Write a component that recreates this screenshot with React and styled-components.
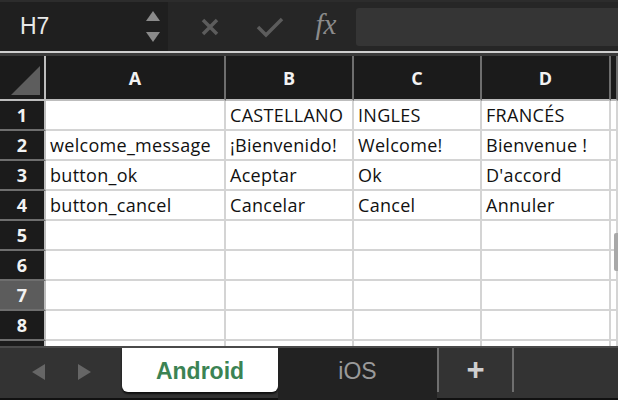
import React from 'react';
import styled, { createGlobalStyle } from 'styled-components';

const GlobalStyle = createGlobalStyle`
  html, body {
    margin: 0;
    padding: 0;
    background: #262626;
    overflow: hidden;
  }
  * {
    box-sizing: border-box;
  }
`;

const Window = styled.div`
  width: 618px;
  height: 400px;
  display: flex;
  flex-direction: column;
  background: #262626;
  overflow: hidden;
`;

const Toolbar = styled.div`
  height: 51px;
  display: flex;
  align-items: stretch;
  background: #262626;
  border-top: 2px solid #2c2c2c;
`;

const NameBox = styled.div`
  width: 168px;
  display: flex;
  align-items: center;
  justify-content: space-between;
  padding: 0 8px 0 20px;
  background: #1f1f1f;
  color: #e8e8e8;
  font-family: 'Liberation Sans', Arial, sans-serif;
  font-size: 23px;
`;

const Stepper = styled.div`
  display: flex;
  flex-direction: column;
  gap: 11px;
`;

const Arrow = styled.div`
  width: 0;
  height: 0;
  border-left: 7px solid transparent;
  border-right: 7px solid transparent;
  ${(p) => (p.up ? 'border-bottom: 10px solid #8a8a8a;' : 'border-top: 10px solid #8a8a8a;')}
`;

const ActionIcon = styled.div`
  width: 60px;
  display: flex;
  align-items: center;
  justify-content: center;
`;

const Fx = styled.div`
  width: 52px;
  display: flex;
  align-items: center;
  justify-content: center;
  color: #8c8c8c;
  font-family: 'Liberation Serif', 'DejaVu Serif', serif;
  font-style: italic;
  font-size: 29px;
  padding-bottom: 4px;
`;

const FormulaInput = styled.div`
  flex: 1;
  margin: 6px 0 5px 4px;
  background: #353535;
  border-radius: 3px 0 0 3px;
`;

const Divider = styled.div`
  height: 5px;
  border-top: 2px solid #cfcfcf;
  background: #3a3a3a;
`;

const Sheet = styled.div`
  flex: 1;
  display: grid;
  grid-template-columns: 46px 180px 128px 128px 129px 1fr;
  grid-template-rows: 45px repeat(9, 30px);
  background: #ffffff;
  overflow: hidden;
  position: relative;
`;

const Corner = styled.div`
  background: #1b1b1b;
  border-right: 2px solid #bdbdbd;
  border-bottom: 2px solid #bdbdbd;
  position: relative;
  &::after {
    content: '';
    position: absolute;
    right: 4px;
    bottom: 4px;
    width: 0;
    height: 0;
    border-left: 29px solid transparent;
    border-bottom: 29px solid #5d5d5d;
  }
`;

const ColHead = styled.div`
  background: #1b1b1b;
  color: #f2f2f2;
  border-right: 2px solid #6e6e6e;
  border-bottom: 2px solid #bdbdbd;
  display: flex;
  align-items: center;
  justify-content: center;
  font-family: 'Open Sans', Lato, sans-serif;
  font-weight: 700;
  font-size: 18px;
`;

const RowHead = styled.div`
  background: ${(p) => (p.selected ? '#5c5c5c' : '#1b1b1b')};
  color: #f2f2f2;
  border-right: 2px solid #bdbdbd;
  border-bottom: 2px solid #6e6e6e;
  display: flex;
  align-items: center;
  justify-content: center;
  font-family: 'Open Sans', Lato, sans-serif;
  font-weight: 700;
  font-size: 18px;
`;

const Cell = styled.div`
  border-right: 2px solid #d4d4d4;
  border-bottom: 2px solid #d4d4d4;
  color: #111;
  font-family: 'Open Sans', Lato, sans-serif;
  font-size: 18px;
  letter-spacing: 0.3px;
  display: flex;
  align-items: center;
  padding-left: 4px;
  white-space: nowrap;
  overflow: hidden;
`;

const ScrollThumb = styled.div`
  position: absolute;
  right: 0;
  top: 177px;
  width: 4px;
  height: 38px;
  border-radius: 2px 0 0 2px;
  background: #a8a8a8;
`;

const TabBar = styled.div`
  height: 54px;
  display: flex;
  background: #333333;
  border-top: 2px solid #4a4a4a;
  border-bottom: 2px solid #111;
`;

const NavArea = styled.div`
  width: 122px;
  display: flex;
  align-items: center;
  justify-content: center;
  gap: 33px;
  padding-bottom: 2px;
`;

const NavArrow = styled.div`
  width: 0;
  height: 0;
  border-top: 8px solid transparent;
  border-bottom: 8px solid transparent;
  ${(p) => (p.left ? 'border-right: 13px solid #666;' : 'border-left: 13px solid #666;')}
`;

const Tab = styled.div`
  width: ${(p) => p.width}px;
  display: flex;
  align-items: center;
  justify-content: center;
  font-family: 'Liberation Sans', Arial, sans-serif;
  font-size: 23px;
  ${(p) =>
    p.active
      ? `
    background: #ffffff;
    color: #3b8354;
    font-weight: 700;
    height: 44px;
    border-radius: 0 0 6px 6px;
    box-shadow: 0 2px 2px rgba(0, 0, 0, 0.7);
    padding-top: 2px;
  `
      : `
    background: #222222;
    color: #9a9a9a;
    margin-bottom: -2px;
    padding-bottom: 6px;
  `}
`;

const AddTab = styled.div`
  width: 77px;
  display: flex;
  align-items: center;
  justify-content: center;
  border-left: 2px solid #6f6f6f;
  border-right: 2px solid #6f6f6f;
  margin-bottom: 6px;
  color: #cfcfcf;
  font-family: 'Liberation Sans', Arial, sans-serif;
  font-weight: 700;
  font-size: 31px;
`;

const columns = ['A', 'B', 'C', 'D', ''];

const rows = [
  ['', 'CASTELLANO', 'INGLES', 'FRANCÉS', ''],
  ['welcome_message', '¡Bienvenido!', 'Welcome!', 'Bienvenue !', ''],
  ['button_ok', 'Aceptar', 'Ok', "D'accord", ''],
  ['button_cancel', 'Cancelar', 'Cancel', 'Annuler', ''],
  ['', '', '', '', ''],
  ['', '', '', '', ''],
  ['', '', '', '', ''],
  ['', '', '', '', ''],
  ['', '', '', '', ''],
];

const App = () => {
  return (
    <Window>
      <GlobalStyle />
      <Toolbar>
        <NameBox>
          H7
          <Stepper>
            <Arrow up />
            <Arrow />
          </Stepper>
        </NameBox>
        <ActionIcon style={{ marginLeft: 12 }}>
          <svg width="20" height="20" viewBox="0 0 20 20">
            <path d="M3 3 L17 17 M17 3 L3 17" stroke="#5c5c5c" strokeWidth="3.5" />
          </svg>
        </ActionIcon>
        <ActionIcon>
          <svg width="28" height="22" viewBox="0 0 28 22">
            <path d="M2 11 L10 19 L26 3" stroke="#5c5c5c" strokeWidth="3.5" fill="none" />
          </svg>
        </ActionIcon>
        <Fx>fx</Fx>
        <FormulaInput />
      </Toolbar>
      <Divider />
      <Sheet>
        <Corner />
        {columns.map((c, i) => (
          <ColHead key={i}>{c}</ColHead>
        ))}
        {rows.map((r, i) => (
          <React.Fragment key={i}>
            <RowHead selected={i === 6}>{i < 8 ? i + 1 : ''}</RowHead>
            {r.map((v, j) => (
              <Cell key={j}>{v}</Cell>
            ))}
          </React.Fragment>
        ))}
        <ScrollThumb />
      </Sheet>
      <TabBar>
        <NavArea>
          <NavArrow left />
          <NavArrow />
        </NavArea>
        <Tab active width={156}>Android</Tab>
        <Tab width={159}>iOS</Tab>
        <AddTab>+</AddTab>
      </TabBar>
    </Window>
  );
};

export default App;
